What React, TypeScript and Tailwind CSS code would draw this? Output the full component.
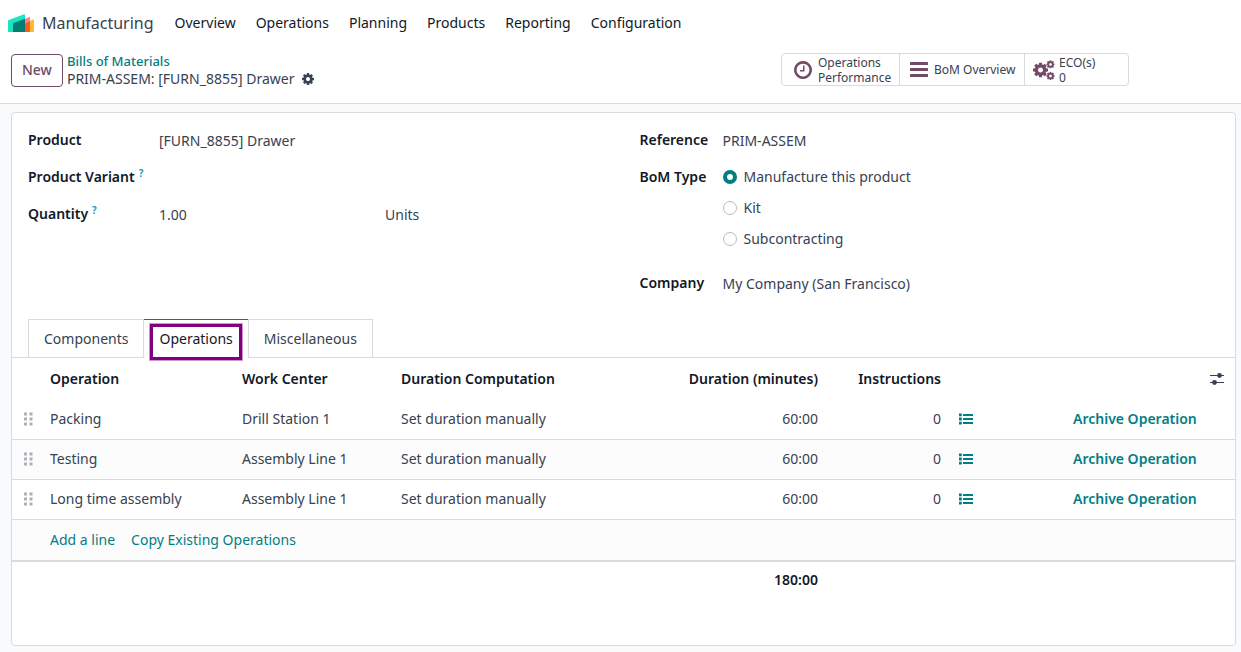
import { useState } from "react";

const menu = ["Overview", "Operations", "Planning", "Products", "Reporting", "Configuration"];
const tabs = ["Components", "Operations", "Miscellaneous"];
const bomTypes = ["Manufacture this product", "Kit", "Subcontracting"];

const operations = [
  { name: "Packing", workCenter: "Drill Station 1", computation: "Set duration manually", duration: "60:00", instructions: 0 },
  { name: "Testing", workCenter: "Assembly Line 1", computation: "Set duration manually", duration: "60:00", instructions: 0 },
  { name: "Long time assembly", workCenter: "Assembly Line 1", computation: "Set duration manually", duration: "60:00", instructions: 0 },
];

const COG =
  "M1152 896q0-106-75-181t-181-75-181 75-75 181 75 181 181 75 181-75 75-181zm512-109v222q0 12-8 23t-20 13l-185 28q-19 54-39 91 35 50 107 138 10 12 10 25t-9 23q-27 37-99 108t-94 71q-12 0-26-9l-138-108q-44 23-91 38-16 136-29 186-7 28-36 28h-222q-14 0-24.5-8.5t-11.5-21.5l-28-184q-49-16-90-37l-141 107q-10 9-25 9-14 0-25-11-126-114-165-168-7-10-7-23 0-12 8-23 15-21 51-66.5t54-70.5q-27-50-41-99l-183-27q-13-2-21-12.5t-8-23.5v-222q0-12 8-23t19-13l186-28q14-46 39-92-40-57-107-138-10-12-10-24 0-10 9-23 26-36 98.5-107.5t94.5-71.5q13 0 26 10l138 107q44-23 91-38 16-136 29-186 7-28 36-28h222q14 0 24.5 8.5t11.5 21.5l28 184q49 16 90 37l142-107q9-9 24-9 13 0 25 10 129 119 165 170 7 8 7 22 0 12-8 23-15 21-51 66.5t-54 70.5q26 50 41 98l183 28q13 2 21 12.5t8 23.5z";

const CogIcon = () => (
  <svg className="h-3 w-3" viewBox="128 128 1536 1536" fill="currentColor">
    <path d={COG} />
  </svg>
);

const ClockIcon = () => (
  <svg className="h-[18px] w-[18px] shrink-0 text-[#714b67]" viewBox="128 128 1536 1536" fill="currentColor">
    <path d="M1024 544v448q0 14-9 23t-23 9h-320q-14 0-23-9t-9-23v-64q0-14 9-23t23-9h224v-352q0-14 9-23t23-9h64q14 0 23 9t9 23zm416 352q0-148-73-273t-198-198-273-73-273 73-198 198-73 273 73 273 198 198 273 73 273-73 198-198 73-273zm224 0q0 209-103 385.5t-279.5 279.5-385.5 103-385.5-103-279.5-279.5-103-385.5 103-385.5 279.5-279.5 385.5-103 385.5 103 279.5 279.5 103 385.5z" />
  </svg>
);

const BarsIcon = () => (
  <svg className="h-4 w-[18px] shrink-0 text-[#714b67]" viewBox="0 0 18 16" fill="currentColor">
    <rect y="0" width="18" height="3" rx="0.6" />
    <rect y="6" width="18" height="3" rx="0.6" />
    <rect y="12" width="18" height="3" rx="0.6" />
  </svg>
);

// One large gear with two small ones on its right
const CogsIcon = () => (
  <svg className="h-5 w-[22px] shrink-0 text-[#714b67]" viewBox="0 0 22 20" fill="currentColor">
    <svg x="0" y="2.5" width="15" height="15" viewBox="128 128 1536 1536"><path d={COG} /></svg>
    <svg x="13.3" y="0.2" width="8.4" height="8.4" viewBox="128 128 1536 1536"><path d={COG} /></svg>
    <svg x="13.3" y="11.8" width="8.4" height="8.4" viewBox="128 128 1536 1536"><path d={COG} /></svg>
  </svg>
);

const ListIcon = () => (
  <svg className="h-3 w-3.5" viewBox="0 0 14 12" fill="currentColor">
    <path d="M0 0.5h2.800v2.800H0zM0 4.600h2.800v2.800H0zM0 8.700h2.800v2.800H0zM4 1h10v2H4zM4 5h10v2H4zM4 9h10v2H4z" />
  </svg>
);

const HandleIcon = () => (
  <svg className="h-[14px] w-[9px] text-[#adb0b8]" viewBox="0 0 9 14" fill="currentColor">
    <path d="M0 0.5h3v3H0zM5.5 0.5h3v3h-3zM0 5.5h3v3H0zM5.5 5.5h3v3h-3zM0 10.5h3v3H0zM5.5 10.5h3v3h-3z" />
  </svg>
);

const SlidersIcon = () => (
  <svg className="h-3 w-3.5" viewBox="0 0 14 12">
    <path d="M0 2.5h14M0 9.5h14" stroke="currentColor" strokeWidth="1" />
    <circle cx="9.5" cy="2.5" r="2.4" fill="currentColor" />
    <circle cx="4.5" cy="9.5" r="2.4" fill="currentColor" />
  </svg>
);

const AppLogo = () => (
  <svg className="h-[18px] w-[26px]" viewBox="0 0 26 18">
    <path d="M0 17.5V7Q0 6.300 0.800 5.900L16 0.300Q17 0 17 0.900V17.500Q17 18 16.500 18H0.500Q0 18 0 17.500z" fill="#1ee3c1" />
    <path d="M21 18V7.500L25.200 5.400Q26 5.100 26 6V17.200Q26 18 25.200 18z" fill="#ffb92e" />
    <path d="M16 18V5.200L21.200 3Q22 2.800 22 3.600V18z" fill="#fc8093" />
    <path d="M16 18V10L22 7.300V17.200Q22 18 21.200 18z" fill="#fc5a1a" />
    <path d="M5 18V9.800Q5 9.200 5.700 8.900L17 4.800V18z" fill="#017e71" />
  </svg>
);

const inputClass = "h-6 w-full min-w-0 bg-transparent outline-none";
const labelClass = "shrink-0 font-semibold text-[#111827]";

const Help = () => <sup className="ml-1 text-[10px] font-semibold text-[#0a8fb5]">?</sup>;

const App = () => {
  const [tab, setTab] = useState("Operations");
  const [bomType, setBomType] = useState(bomTypes[0]);

  return (
    <div className="flex min-h-screen flex-col bg-[#f9fafb] font-['Noto_Sans','Open_Sans',sans-serif] text-sm text-[#374151]">
      <header className="flex h-[46px] items-center bg-white pl-2">
        <AppLogo />
        <a href="#" className="ml-2 text-base">Manufacturing</a>
        <nav className="ml-[21px] flex gap-5 text-[#111827]">
          {menu.map((item) => (
            <a key={item} href="#">{item}</a>
          ))}
        </nav>
      </header>

      {/* Control panel */}
      <div className="flex h-[58px] items-start justify-between border-b border-[#d8dadd] bg-white pr-28 pl-[11px] pt-[7px]">
        <div className="flex items-center gap-1">
          <button className="h-[33px] rounded border border-[#714b67] px-2.5 font-medium text-[#714b67]">New</button>
          <div className="flex flex-col leading-[17px]">
            <a href="#" className="text-[13px] font-medium text-[#017e84]">Bills of Materials</a>
            <div className="flex items-center gap-2">
              <span>PRIM-ASSEM: [FURN_8855] Drawer</span>
              <button aria-label="Actions"><CogIcon /></button>
            </div>
          </div>
        </div>

        <div className="flex h-[33px] rounded border border-[#d8dadd] text-xs leading-[15px]">
          <button className="flex w-[118px] items-center gap-1.5 border-r border-[#d8dadd] pl-3 text-left">
            <ClockIcon />
            <span className="flex flex-col">
              <span>Operations</span>
              <span>Performance</span>
            </span>
          </button>
          <button className="flex w-[125px] items-center gap-1.5 border-r border-[#d8dadd] pl-2.5 text-left">
            <BarsIcon />
            <span>BoM Overview</span>
          </button>
          <button className="flex w-[103px] items-center gap-1 pl-2 text-left">
            <CogsIcon />
            <span className="flex flex-col">
              <span>ECO(s)</span>
              <span>0</span>
            </span>
          </button>
        </div>
      </div>

      {/* Form sheet */}
      <main className="mt-2 mr-[5px] mb-1.5 ml-[11px] flex-1 rounded border border-[#d8dadd] bg-white">
        <div className="grid h-[206px] grid-cols-2 px-4 pt-[15px]">
          <div className="flex flex-col gap-[13px]">
            <div className="flex items-center">
              <label htmlFor="product" className={`${labelClass} w-[131px]`}>Product</label>
              <input id="product" className={inputClass} defaultValue="[FURN_8855] Drawer" />
            </div>
            <div className="flex items-center">
              <label htmlFor="variant" className={`${labelClass} w-[131px]`}>Product Variant<Help /></label>
              <input id="variant" className={inputClass} />
            </div>
            <div className="flex items-center">
              <label htmlFor="quantity" className={`${labelClass} w-[131px]`}>Quantity<Help /></label>
              <input id="quantity" className="h-6 w-[226px] bg-transparent outline-none" defaultValue="1.00" />
              <input aria-label="Unit of measure" className="h-6 w-24 bg-transparent outline-none" defaultValue="Units" />
            </div>
          </div>

          <div className="flex flex-col gap-[13px] pl-4">
            <div className="flex items-center">
              <label htmlFor="reference" className={`${labelClass} w-[83px]`}>Reference</label>
              <input id="reference" className={inputClass} defaultValue="PRIM-ASSEM" />
            </div>
            <fieldset className="flex">
              <legend className={`${labelClass} float-left w-[83px] leading-6`}>BoM Type</legend>
              <div className="flex flex-col gap-[7px]">
                {bomTypes.map((type) => (
                  <label key={type} className="flex h-6 items-center gap-[7px]">
                    <input
                      type="radio"
                      name="bomType"
                      className="h-3.5 w-3.5 appearance-none rounded-full border border-[#bbbbbb] bg-white checked:border-4 checked:border-[#017e84]"
                      checked={bomType === type}
                      onChange={() => setBomType(type)}
                    />
                    {type}
                  </label>
                ))}
              </div>
            </fieldset>
            <div className="mt-[7px] flex items-center">
              <label htmlFor="company" className={`${labelClass} w-[83px]`}>Company</label>
              <input id="company" className={inputClass} defaultValue="My Company (San Francisco)" />
            </div>
          </div>
        </div>

        <div role="tablist" className="flex h-[39px] border-b border-[#d8dadd] pl-4">
          {tabs.map((name) => (
            <button
              key={name}
              role="tab"
              aria-selected={tab === name}
              onClick={() => setTab(name)}
              className={
                tab === name
                  ? "relative -mb-px border-t border-t-[#714b67] bg-white px-[15px] text-[#111827]"
                  : "border border-b-0 border-[#d8dadd] px-[15px]"
              }
            >
              {name}
              {tab === name && (
                <span className="absolute inset-x-1.5 top-1 -bottom-0.5 border-3 border-[#800080] ring-1 ring-[#800080]/40" />
              )}
            </button>
          ))}
        </div>

        <table className="w-full table-fixed border-collapse">
          <colgroup>
            <col className="w-[30px]" />
            <col className="w-[192px]" />
            <col className="w-[159px]" />
            <col />
            <col className="w-[147px]" />
            <col className="w-[123px]" />
            <col className="w-[116px]" />
            <col className="w-[139px]" />
            <col className="w-[31px]" />
          </colgroup>
          <thead>
            <tr className="h-[41px] text-left whitespace-nowrap text-[#111827]">
              <th />
              <th className="px-2 font-semibold">Operation</th>
              <th className="px-2 font-semibold">Work Center</th>
              <th className="px-2 font-semibold">Duration Computation</th>
              <th className="px-2 text-right font-semibold">Duration (minutes)</th>
              <th className="px-2 text-right font-semibold">Instructions</th>
              <th />
              <th />
              <th className="align-middle">
                <button aria-label="Optional columns" className="ml-1.5 block text-[#374151]"><SlidersIcon /></button>
              </th>
            </tr>
          </thead>
          <tbody>
            {operations.map((op) => (
              <tr key={op.name} className="h-10 border-b border-[#d8dadd] even:bg-[#fcfcfc]">
                <td className="pl-3"><HandleIcon /></td>
                <td className="px-2">{op.name}</td>
                <td className="px-2">{op.workCenter}</td>
                <td className="px-2">{op.computation}</td>
                <td className="px-2 text-right">{op.duration}</td>
                <td className="px-2 text-right">{op.instructions}</td>
                <td className="px-2.5">
                  <button aria-label="Instructions" className="block text-[#017e84]"><ListIcon /></button>
                </td>
                <td className="px-2 whitespace-nowrap">
                  <button className="font-semibold text-[#017e84]">Archive Operation</button>
                </td>
                <td />
              </tr>
            ))}
            <tr className="h-[42px] bg-[#fcfcfc]">
              <td />
              <td colSpan={8} className="px-2 text-[#017e84]">
                <a href="#">Add a line</a>
                <a href="#" className="ml-4">Copy Existing Operations</a>
              </td>
            </tr>
          </tbody>
          <tfoot>
            <tr className="h-9 border-t-2 border-[#d8dadd] text-[#111827]">
              <td colSpan={4} />
              <td className="px-2 text-right font-semibold">180:00</td>
              <td colSpan={4} />
            </tr>
          </tfoot>
        </table>
      </main>
    </div>
  );
};

export default App;
